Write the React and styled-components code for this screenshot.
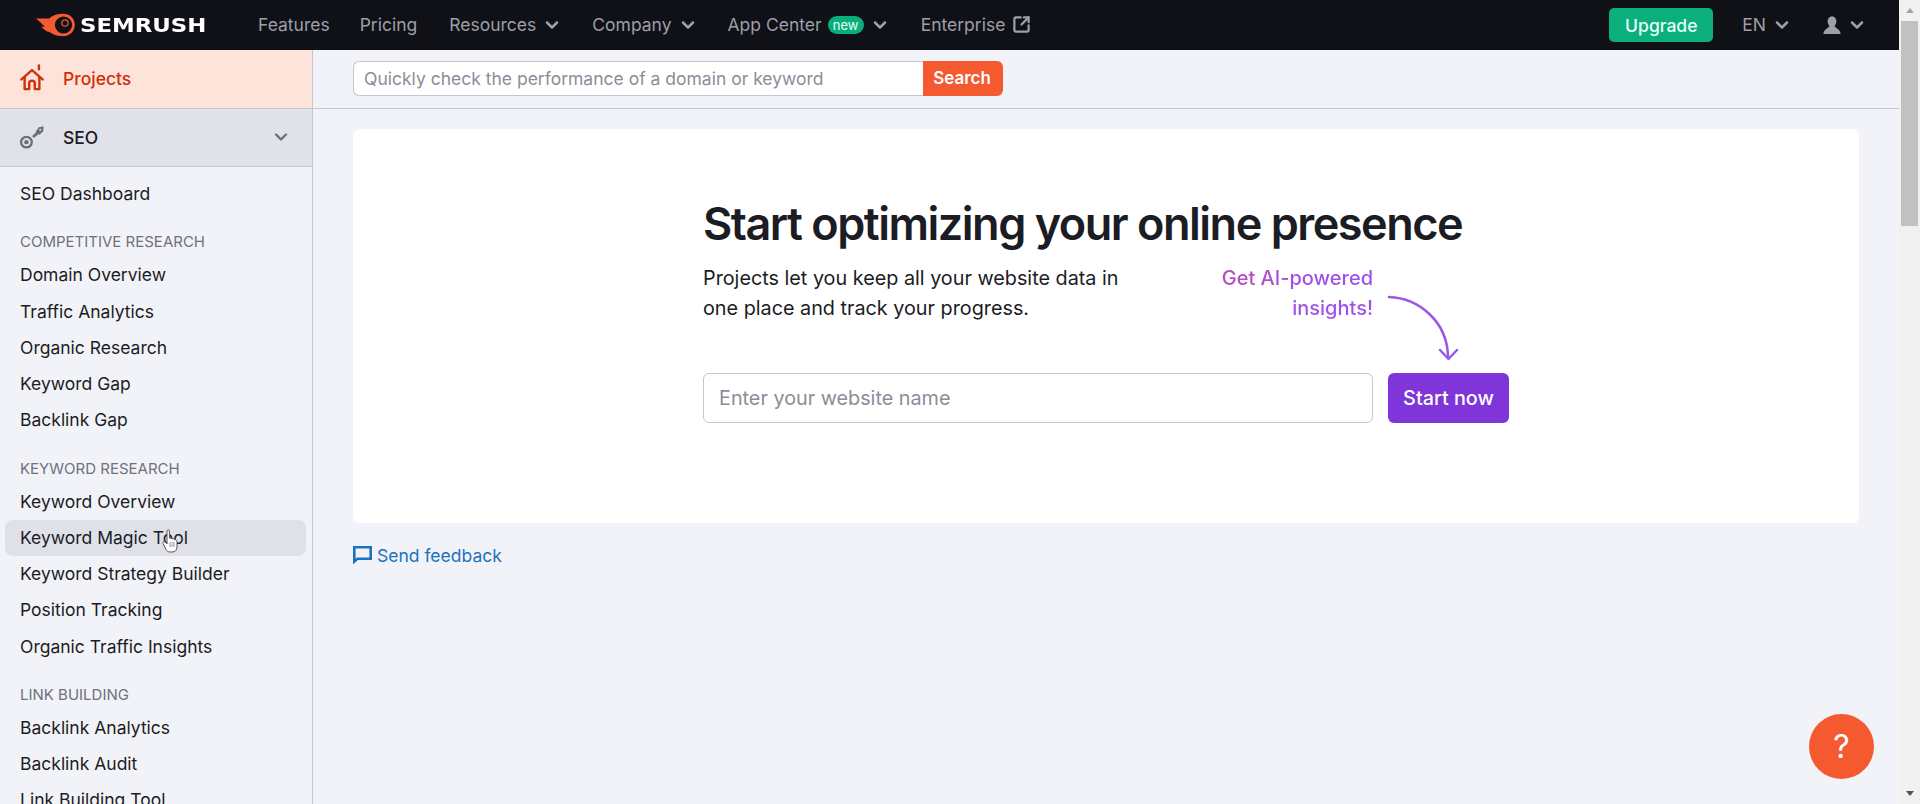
import styled, { createGlobalStyle } from "styled-components";
import { ChevronDown, SquareArrowOutUpRight } from "lucide-react";

const Global = createGlobalStyle`
  html, body { margin: 0; height: 100%; overflow: hidden; }
  body { font-family: Inter, "Noto Sans", sans-serif; background: #f2f3f8; color: #1b1c24; }
  * { box-sizing: border-box; }
`;

const Page = styled.div`
  display: flex;
  height: 100vh;
  overflow: hidden;
`;

const Content = styled.div`
  flex: 1;
  min-width: 0;
  display: flex;
  flex-direction: column;
`;

const TopBar = styled.header`
  height: 50px;
  flex: none;
  background: #101116;
  display: flex;
  align-items: center;
  padding-left: 36px;
  padding-right: 32px;
  color: #9d9fa9;
  font-size: 17.5px;
`;

const Logo = styled.div`
  display: flex;
  align-items: center;
  gap: 5px;
  width: 222px;
`;

const LogoWord = styled.span`
  font-family: "DejaVu Sans", sans-serif;
  font-weight: 700;
  font-size: 19px;
  color: #fff;
  display: inline-block;
  transform: scaleX(1.2);
  transform-origin: left center;
`;

const NavItem = styled.a`
  display: flex;
  align-items: center;
  gap: ${(p) => p.$gap ?? 6}px;
  margin-right: ${(p) => p.$mr ?? 30}px;
  padding-bottom: 1px;
  white-space: nowrap;
`;

const NewBadge = styled.span`
  background: #0aad7c;
  color: #e8fff7;
  font-size: 13px;
  height: 18px;
  width: 36px;
  border-radius: 9px;
  display: flex;
  align-items: center;
  justify-content: center;
`;

const Spacer = styled.div`
  flex: 1;
`;

const UpgradeButton = styled.button`
  width: 104px;
  height: 34px;
  border: 0;
  border-radius: 5px;
  background: #0aaf7c;
  color: #e6fff6;
  font: 500 17.5px Inter, sans-serif;
  margin-right: 29px;
`;

const Body = styled.div`
  flex: 1;
  min-height: 0;
  display: flex;
`;

const Sidebar = styled.aside`
  width: 313px;
  flex: none;
  border-right: 1px solid #c4c6d0;
  overflow: hidden;
`;

const SideHead = styled.div`
  height: ${(p) => p.$h}px;
  display: flex;
  align-items: center;
  padding: 0 20px 1px;
  gap: 19px;
  font-size: 17.5px;
  font-weight: 500;
  background: ${(p) => p.$bg};
  color: ${(p) => p.$color};
  border-bottom: 1px solid #c4c6d0;
`;

const SideIcon = styled.span`
  width: 24px;
  height: 30px;
  flex: none;
  display: flex;
  align-items: center;
`;

const SideChevron = styled.span`
  margin-left: auto;
  margin-right: 1px;
  display: flex;
  color: #6b6d78;
`;

const NavGroup = styled.div`
  padding-top: ${(p) => p.$pt ?? 21}px;
`;

const GroupTitle = styled.div`
  height: 18px;
  line-height: 18px;
  margin-bottom: 6px;
  padding-left: 20px;
  font-size: 15px;
  color: #6f717c;
`;

const SideLink = styled.a`
  position: relative;
  display: flex;
  align-items: center;
  height: 36.25px;
  margin: 0 6px 0 5px;
  padding: 0 0 1px 15px;
  font-size: 17.5px;
  border-radius: 8px;
  white-space: nowrap;
  background: ${(p) => (p.$hover ? "#dfe0e8" : "transparent")};
`;

const Cursor = styled.svg`
  position: absolute;
  left: 157px;
  top: 9px;
`;

const Main = styled.main`
  flex: 1;
  min-width: 0;
  display: flex;
  flex-direction: column;
`;

const SearchRow = styled.div`
  height: 59px;
  flex: none;
  display: flex;
  padding: 11px 40px 0;
  border-bottom: 1px solid #c4c6d0;
  align-items: flex-start;
`;

const SearchInput = styled.div`
  width: 570px;
  height: 35px;
  background: #fff;
  border: 1px solid #c4c6d0;
  border-right: 0;
  border-radius: 6px 0 0 6px;
  padding-left: 10px;
  display: flex;
  align-items: center;
  font-size: 17.5px;
  color: #8b8d98;
`;

const SearchButton = styled.button`
  width: 80px;
  height: 35px;
  border: 0;
  border-radius: 0 6px 6px 0;
  background: #f4592f;
  color: #fff;
  font: 600 17px Inter, sans-serif;
  padding: 0 2px 2px 0;
`;

const MainBody = styled.div`
  padding: 20px 40px 0;
`;

const Card = styled.section`
  background: #fff;
  border-radius: 6px;
  display: flex;
  justify-content: center;
  padding: 67px 0 100px;
`;

const CardInner = styled.div`
  width: 806px;
`;

const Heading = styled.h1`
  margin: 0;
  font-size: 45px;
  line-height: 56px;
  letter-spacing: -1.48px;
  font-weight: 600;
  color: #1b1c24;
  white-space: nowrap;
`;

const InfoRow = styled.div`
  position: relative;
  display: flex;
  justify-content: space-between;
  width: 670px;
  margin-top: 11px;
  font-size: 19.8px;
  line-height: 30px;
`;

const Lead = styled.p`
  margin: 0;
  width: 430px;
`;

const Promo = styled.p`
  margin: 0;
  width: 190px;
  text-align: right;
  font-size: 20px;
  background: linear-gradient(125deg, #c9459a 0%, #a34fe4 55%, #9a50ef 100%);
  -webkit-background-clip: text;
  background-clip: text;
  color: transparent;
  font-weight: 500;
`;

const Arrow = styled.svg`
  position: absolute;
  left: 681px;
  top: 0;
  overflow: visible;
`;

const StartForm = styled.div`
  display: flex;
  gap: 15px;
  margin-top: 50px;
`;

const SiteInput = styled.div`
  width: 670px;
  height: 50px;
  border: 1px solid #c4c6d0;
  border-radius: 6px;
  padding-left: 15px;
  display: flex;
  align-items: center;
  font-size: 19.8px;
  color: #8b8d98;
`;

const StartButton = styled.button`
  width: 121px;
  height: 50px;
  border: 0;
  border-radius: 6px;
  background: #7f35d9;
  color: #fff;
  font: 500 19.8px Inter, sans-serif;
`;

const Feedback = styled.a`
  display: flex;
  align-items: center;
  gap: 5px;
  margin-top: 21px;
  height: 22px;
  font-size: 17.5px;
  color: #1a72bd;
`;

const HelpButton = styled.button`
  position: fixed;
  left: 1809px;
  top: 714px;
  width: 65px;
  height: 65px;
  border: 0;
  border-radius: 50%;
  background: #f4592f;
  color: #fff;
  font: 400 32px Inter, sans-serif;
`;

const ScrollTrack = styled.div`
  width: 21px;
  flex: none;
  background: #f1f1f1;
  display: flex;
  flex-direction: column;
  align-items: center;
`;

const ScrollCap = styled.div`
  height: 21px;
  flex: none;
  display: flex;
  align-items: center;
  justify-content: center;
`;

const ScrollThumb = styled.div`
  width: 17px;
  height: 205px;
  background: #c1c1c1;
`;

const ScrollFill = styled.div`
  flex: 1;
`;

const Triangle = styled.span`
  width: 0;
  height: 0;
  border-left: 4.5px solid transparent;
  border-right: 4.5px solid transparent;
  ${(p) => (p.$up ? "border-bottom: 5px solid #a3a3a3;" : "border-top: 5px solid #505050;")}
`;

function Chevron({ size = 20, color = "#9d9fa9" }) {
  return <ChevronDown size={size} color={color} strokeWidth={3} />;
}

function FlameLogo() {
  return (
    <svg width="39" height="24" viewBox="0 0 39 24">
      <path
        d="M0 5.5 L13 5.5 C17 2 22 .8 27 .8 C34 .8 38.8 5.5 38.8 11.8 C38.8 18.4 34 23.2 27 23.2 C20 23.2 15 21 11 16.5 L14 19.5 C10 18.5 7 16 5 13.5 L9 14 C6 11 3 8 0 5.5 Z"
        fill="#f4592f"
      />
      <circle cx="27.5" cy="12" r="8.6" fill="#101116" />
      <circle cx="29" cy="10" r="3.2" fill="none" stroke="#f4592f" strokeWidth="1.2" />
    </svg>
  );
}

function HomeIcon() {
  return (
    <svg width="27" height="31" viewBox="0 0 26 30" fill="none" stroke="#d12f0a" strokeWidth="2.6" strokeLinecap="round" strokeLinejoin="round">
      <path d="M1.5 16 L13 6 L24.5 16" />
      <path d="M5 14 V26.5 H10 V20 C10 16.5 16 16.5 16 20 V26.5 H21 V14" />
      <path d="M20.5 .8 V5" />
    </svg>
  );
}

function KeyIcon() {
  return (
    <svg width="28" height="28" viewBox="0 0 28 28" fill="none" stroke="#6b6d78">
      <circle cx="7.5" cy="20" r="6.2" strokeWidth="2.6" />
      <circle cx="7.5" cy="20" r="2.6" fill="#6b6d78" stroke="none" />
      <path d="M15 14 L24 6.5" strokeWidth="3.4" />
      <path d="M18 8.5 L22 2.5 L27.5 1.5 L27 7.5 L22.5 11.5 Z" fill="#6b6d78" stroke="none" />
      <circle cx="23.6" cy="5.6" r="1.2" fill="#e0e1e9" stroke="none" />
    </svg>
  );
}

function UserIcon() {
  return (
    <svg width="18" height="18" viewBox="0 0 18 18" fill="#9d9fa9">
      <ellipse cx="9" cy="5.5" rx="4.4" ry="5.2" />
      <path d="M6.4 10 C6 12 0.6 13 0.4 18 H17.6 C17.4 13 12 12 11.6 10 Z" />
    </svg>
  );
}

function ChatIcon() {
  return (
    <svg width="19" height="18" viewBox="0 0 19 18" fill="none" stroke="#1a72bd" strokeWidth="2.6" strokeLinejoin="miter">
      <path d="M1.3 15.5 V1.3 H17.7 V12.7 H4.5 Z" />
    </svg>
  );
}

function HandCursor() {
  return (
    <Cursor width="16" height="24" viewBox="0 0 16 24" fill="#fff" stroke="#555" strokeWidth="1">
      <path d="M5 2 C5 .6 7.4 .6 7.4 2 V9 L9.6 9.4 L12 10 L14 11 C15 11.6 15 13 15 14 V18 C15 21 13 23 10 23 H8 C6 23 5 22 4 20.5 L1 14.5 C.4 13 2 12 3 13 L5 15 Z" />
      <path d="M8 13 V18 M10 13 V18 M12 13 V18" stroke="#999" />
    </Cursor>
  );
}

const groups = [
  { title: "COMPETITIVE RESEARCH", links: ["Domain Overview", "Traffic Analytics", "Organic Research", "Keyword Gap", "Backlink Gap"] },
  { title: "KEYWORD RESEARCH", links: ["Keyword Overview", "Keyword Magic Tool", "Keyword Strategy Builder", "Position Tracking", "Organic Traffic Insights"] },
  { title: "LINK BUILDING", links: ["Backlink Analytics", "Backlink Audit", "Link Building Tool"] },
];

export default function App() {
  return (
    <>
      <Global />
      <Page>
        <Content>
          <TopBar>
            <Logo>
              <FlameLogo />
              <LogoWord>SEMRUSH</LogoWord>
            </Logo>
            <NavItem>Features</NavItem>
            <NavItem $mr={32}>Pricing</NavItem>
            <NavItem>Resources <Chevron /></NavItem>
            <NavItem>Company <Chevron /></NavItem>
            <NavItem $mr={31}>App Center <NewBadge>new</NewBadge> <Chevron /></NavItem>
            <NavItem $gap={7}>Enterprise <SquareArrowOutUpRight size={19} strokeWidth={2.8} /></NavItem>
            <Spacer />
            <UpgradeButton>Upgrade</UpgradeButton>
            <NavItem $mr={31}>EN <Chevron /></NavItem>
            <NavItem $mr={0}><UserIcon /> <Chevron /></NavItem>
          </TopBar>
          <Body>
            <Sidebar>
              <SideHead $h={59} $bg="#fee3da" $color="#d12f0a">
                <SideIcon><HomeIcon /></SideIcon>
                Projects
              </SideHead>
              <SideHead $h={58} $bg="#e0e1e9" $color="#1b1c24">
                <SideIcon><KeyIcon /></SideIcon>
                SEO
                <SideChevron><ChevronDown size={20} strokeWidth={2.8} /></SideChevron>
              </SideHead>
              <NavGroup $pt={9}>
                <SideLink>SEO Dashboard</SideLink>
              </NavGroup>
              {groups.map((group) => (
                <NavGroup key={group.title}>
                  <GroupTitle>{group.title}</GroupTitle>
                  {group.links.map((link) => (
                    <SideLink key={link} $hover={link === "Keyword Magic Tool"}>
                      {link}
                      {link === "Keyword Magic Tool" && <HandCursor />}
                    </SideLink>
                  ))}
                </NavGroup>
              ))}
            </Sidebar>
            <Main>
              <SearchRow>
                <SearchInput>Quickly check the performance of a domain or keyword</SearchInput>
                <SearchButton>Search</SearchButton>
              </SearchRow>
              <MainBody>
                <Card>
                  <CardInner>
                    <Heading>Start optimizing your online presence</Heading>
                    <InfoRow>
                      <Lead>Projects let you keep all your website data in one place and track your progress.</Lead>
                      <Promo>Get AI-powered insights!</Promo>
                      <Arrow width="70" height="70" viewBox="0 0 70 70" fill="none" stroke="#9a55ea" strokeWidth="2.5" strokeLinecap="round" strokeLinejoin="round">
                        <path d="M5 34 C34 35 64 58 64 95" />
                        <path d="M56 87 L64.5 96 L73 87" />
                      </Arrow>
                    </InfoRow>
                    <StartForm>
                      <SiteInput>Enter your website name</SiteInput>
                      <StartButton>Start now</StartButton>
                    </StartForm>
                  </CardInner>
                </Card>
                <Feedback>
                  <ChatIcon />
                  Send feedback
                </Feedback>
              </MainBody>
            </Main>
          </Body>
        </Content>
        <ScrollTrack>
          <ScrollCap><Triangle $up /></ScrollCap>
          <ScrollThumb />
          <ScrollFill />
          <ScrollCap><Triangle /></ScrollCap>
        </ScrollTrack>
        <HelpButton>?</HelpButton>
      </Page>
    </>
  );
}
